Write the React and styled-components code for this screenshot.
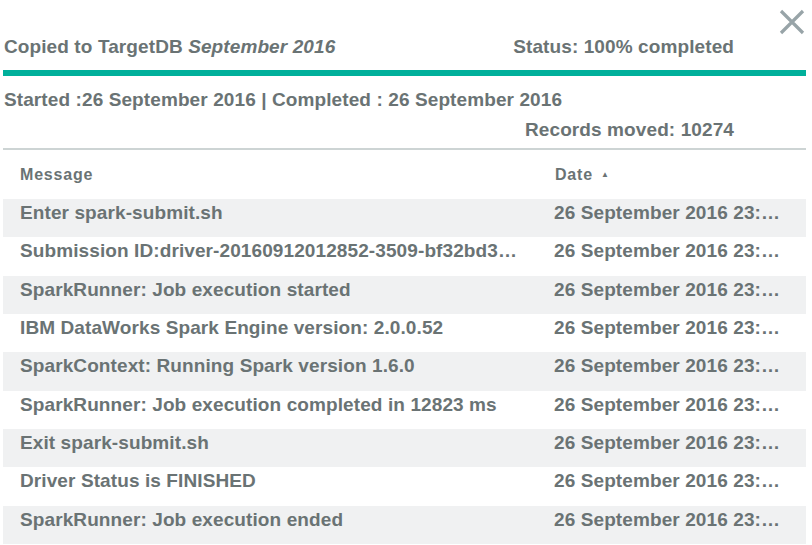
import React from "react";
import styled, { createGlobalStyle } from "styled-components";

const Global = createGlobalStyle`
  html, body { margin: 0; padding: 0; background: #fff; }
  body { font-family: "Liberation Sans", Arial, sans-serif; color: #6a7374; }
`;

const Panel = styled.div`
  position: relative;
  width: 812px;
  height: 545px;
  overflow: hidden;
  padding: 0 6px 0 3px;
  box-sizing: border-box;
`;

const Close = styled.button`
  position: absolute;
  top: 9px;
  right: 7px;
  width: 26px;
  height: 26px;
  border: 0;
  padding: 0;
  background: none;
  cursor: pointer;
`;

const HeadRow = styled.div`
  display: flex;
  justify-content: ${(p) => (p.$end ? "flex-end" : "space-between")};
  align-items: center;
  padding: 0 72px 0 1px;
  height: ${(p) => p.$h}px;
  margin-top: ${(p) => p.$mt || 0}px;
  font-size: 19px;
  letter-spacing: 0.1px;
  font-weight: bold;
  white-space: nowrap;
`;

const Italic = styled.em`
  font-style: italic;
`;

const Progress = styled.div`
  height: 6px;
  margin-top: 6px;
  background: #00b09b;
`;

const Divider = styled.div`
  height: 2px;
  background: #cdd4d4;
`;

const Table = styled.div`
  display: flex;
  flex-direction: column;
`;

const Row = styled.div`
  display: grid;
  grid-template-columns: 550px 1fr;
  height: ${(p) => p.$h}px;
  align-items: start;
  background: ${(p) => (p.$alt ? "#f0f1f2" : "#fff")};
  font-size: ${(p) => (p.$header ? 16 : 19)}px;
  letter-spacing: ${(p) => (p.$header ? "0.8px" : "0.1px")};
  font-weight: bold;
`;

const Cell = styled.div`
  min-width: 0;
  padding: ${(p) => p.$pt}px 0 0 ${(p) => p.$pl}px;
  white-space: nowrap;
  overflow: hidden;
  text-overflow: ellipsis;
  max-width: ${(p) => p.$max || 600}px;
`;

const Arrow = styled.span`
  font-size: 8px;
  margin-left: 8px;
  vertical-align: 3px;
`;

const rows = [
  "Enter spark-submit.sh",
  "Submission ID:driver-20160912012852-3509-bf32bd3c-7a1e-4b2e",
  "SparkRunner: Job execution started",
  "IBM DataWorks Spark Engine version: 2.0.0.52",
  "SparkContext: Running Spark version 1.6.0",
  "SparkRunner: Job execution completed in 12823 ms",
  "Exit spark-submit.sh",
  "Driver Status is FINISHED",
  "SparkRunner: Job execution ended",
];

export default function App() {
  return (
    <>
      <Global />
      <Panel>
        <Close aria-label="Close">
          <svg width="26" height="26" viewBox="0 0 26 26">
            <path d="M2 2 L24 24 M24 2 L2 24" stroke="#98a4a8" strokeWidth="3.2" />
          </svg>
        </Close>
        <HeadRow $h={34} $mt={30}>
          <span>
            Copied to TargetDB <Italic>September 2016</Italic>
          </span>
          <span>Status: 100% completed</span>
        </HeadRow>
        <Progress />
        <HeadRow $h={36} $mt={6}>
          <span>Started :26 September 2016 | Completed : 26 September 2016</span>
        </HeadRow>
        <HeadRow $h={36} $mt={-6} $end>
          <span>Records moved: 10274</span>
        </HeadRow>
        <Divider />
        <Table>
          <Row $header $h={49}>
            <Cell $pt={16} $pl={17}>Message</Cell>
            <Cell $pt={16} $pl={2}>
              Date<Arrow>▲</Arrow>
            </Cell>
          </Row>
          {rows.map((r, i) => (
            <Row key={i} $alt={i % 2 === 0} $h={38.33}>
              <Cell $pt={3} $pl={17} $max={500}>{r}</Cell>
              <Cell $pt={3} $pl={1} $max={229}>26 September 2016 23:41:07</Cell>
            </Row>
          ))}
        </Table>
      </Panel>
    </>
  );
}
